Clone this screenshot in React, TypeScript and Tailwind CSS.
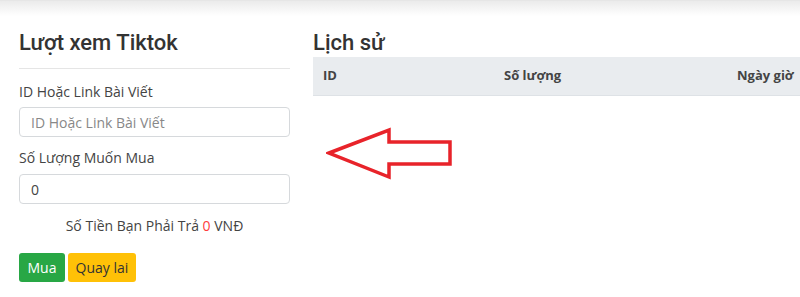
import React from "react";

function Arrow() {
  return (
    <svg width="130" height="56" viewBox="0 0 130 56" fill="none">
      <path
        d="M3 26 L63 3 L63 15 L124 15 L124 37 L63 37 L63 50 Z"
        stroke="#e8232a"
        strokeWidth="3.5"
        strokeLinejoin="miter"
        fill="white"
      />
    </svg>
  );
}

const heading = { fontFamily: "Roboto, 'Liberation Sans', sans-serif" };

export default function App() {
  return (
    <div
      className="w-[800px] h-[297px] bg-white overflow-hidden text-[#212529]"
      style={{ fontFamily: '"Open Sans", "Liberation Sans", sans-serif' }}
    >
      {/* top shadow */}
      <div className="h-[16px] bg-gradient-to-b from-[#ebebeb] to-white border-t border-[#e6e6e6]" />

      <div className="flex">
        {/* left form */}
        <div className="w-[271px] ml-[19px] shrink-0">
          <h4 style={heading} className="text-[22px] font-medium leading-[28px] mt-[13px] text-[#333]">Lượt xem Tiktok</h4>
          <div className="h-px bg-[#e5e5e5] mt-[11px]" />
          <label className="block text-[14px] leading-[20px] mt-[13px] text-[#444]">ID Hoặc Link Bài Viết</label>
          <input
            className="block w-full h-[30px] mt-[5px] px-[11px] text-[14px] border border-[#d6d9dc] rounded-[4px] placeholder:text-[#888] outline-none"
            placeholder="ID Hoặc Link Bài Viết"
          />
          <label className="block text-[14px] leading-[20px] mt-[11px] text-[#444]">Số Lượng Muốn Mua</label>
          <input
            className="block w-full h-[30px] mt-[6px] px-[11px] text-[14px] border border-[#d6d9dc] rounded-[4px] text-[#444] outline-none"
            defaultValue="0"
          />
          <p className="text-center text-[14px] leading-[20px] mt-[12px] text-[#444]">
            Số Tiền Bạn Phải Trả <span className="text-[#ff3b3b]">0</span> VNĐ
          </p>
          <div className="flex gap-[3px] mt-[17px]">
            <button className="h-[29px] w-[46px] rounded-[3px] bg-[#28a745] text-white text-[14px]">Mua</button>
            <button className="h-[29px] w-[68px] rounded-[3px] bg-[#ffc107] text-[#333] text-[14px]">Quay lai</button>
          </div>
        </div>

        {/* right history */}
        <div className="ml-[23px] w-[520px] shrink-0">
          <h4 style={heading} className="text-[22px] font-medium leading-[28px] mt-[13px] text-[#333]">Lịch sử</h4>
          <div className="flex h-[39px] items-center bg-[#e9ecef] border-b border-[#dee2e6] text-[13px] font-bold text-[#444]">
            <div className="w-[181px] pl-[10px]">ID</div>
            <div className="w-[233px] pl-[10px]">Số lượng</div>
            <div className="pl-[10px]">Ngày giờ</div>
          </div>
          <div className="mt-[31px] ml-[13px]">
            <Arrow />
          </div>
        </div>
      </div>
    </div>
  );
}
